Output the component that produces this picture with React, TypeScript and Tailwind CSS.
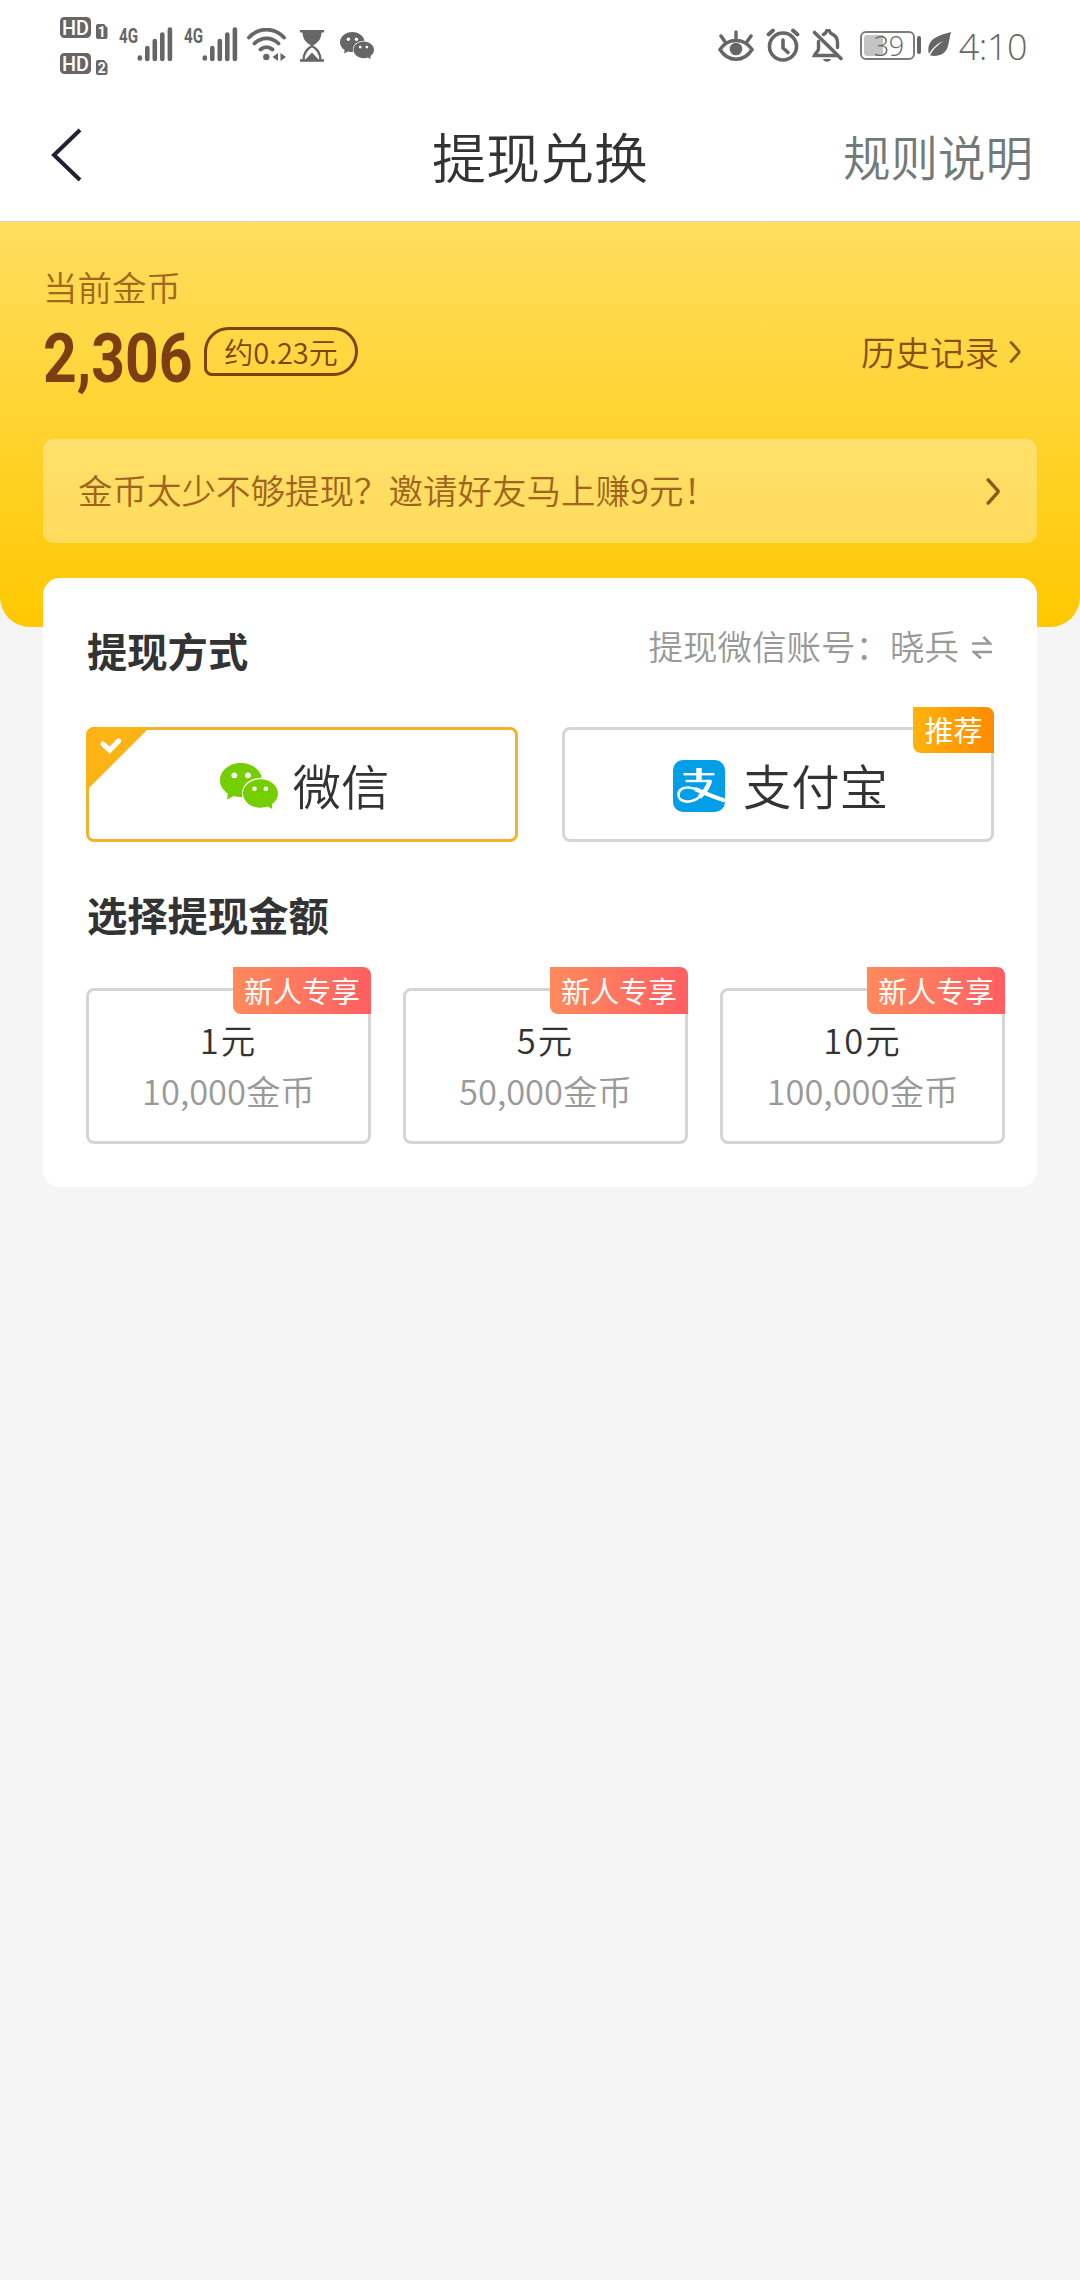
import type { ReactNode } from 'react';

const amounts = [
  { price: '1元', coins: '10,000金币' },
  { price: '5元', coins: '50,000金币' },
  { price: '10元', coins: '100,000金币' },
];

function HdBadge({ sim }: { sim: string }) {
  return (
    <svg width="49" height="24" viewBox="0 0 49 24" fill="#666">
      <rect x="0" y="1" width="31" height="21" rx="4.5" />
      <text x="15.5" y="18.500" fontSize="20" fontWeight="500" fill="#fff" textAnchor="middle" textLength="27" lengthAdjust="spacingAndGlyphs" fontFamily="Roboto, sans-serif">HD</text>
      <path d="M38 8h6l3.500 4v9a2 2 0 0 1-2 2h-7.500a2 2 0 0 1-2-2v-11a2 2 0 0 1 2-2z" />
      <text x="41.700" y="20.500" fontSize="14" fontWeight="700" fill="#fff" textAnchor="middle" fontFamily="Roboto, sans-serif">{sim}</text>
    </svg>
  );
}

function Signal() {
  return (
    <svg width="54" height="42" viewBox="0 -8 54 42">
      <text x="0" y="14.800" fontSize="20" fontWeight="700" fill="#666" textLength="19" lengthAdjust="spacingAndGlyphs" fontFamily="Roboto, sans-serif">4G</text>
      <g stroke="#666" strokeWidth="4.600" strokeLinecap="round">
        <path d="M20.800 30.500v-1M28.300 31v-11M35.800 31v-18M43.300 31v-24.500M50.900 31v-29.500" />
      </g>
    </svg>
  );
}

function WechatLogo({ color, className }: { color: string; className: string }) {
  return (
    <svg viewBox="0 0 58 46" className={className}>
      <path fill={color} d="M21 0C9.400 0 0 7.700 0 17.300c0 5.400 3 10 7.800 13.200L7 36.500l6.800-3.400c2.300.7 4.700 1.100 7.200 1.100 11.600 0 21-7.600 21-17C42 7.700 32.600 0 21 0z" />
      <ellipse cx="40.500" cy="30.500" rx="18.600" ry="15.800" fill="#fff" />
      <path fill={color} d="M40.500 16.200c9.700 0 17.500 6.300 17.500 14.200 0 4.300-2.300 8-6 10.600l.3 5-4.600-2.400c-2.200.7-4.600 1.100-7.200 1.100-9.700 0-17.500-6.400-17.500-14.300s7.800-14.200 17.500-14.200z" />
      <g fill="#fff">
        <circle cx="14.300" cy="12.300" r="2.900" />
        <circle cx="28" cy="12.300" r="2.900" />
        <circle cx="34.500" cy="25.700" r="2.300" />
        <circle cx="45.800" cy="25.700" r="2.300" />
      </g>
    </svg>
  );
}

function AlipayLogo() {
  return (
    <svg viewBox="0 0 52 52" className="mt-[3px] h-[52px] w-[52px]">
      <rect width="52" height="52" rx="10" fill="#029fe8" />
      <g fill="none" stroke="#fff">
        <path d="M10.500 14.200h31" strokeWidth="2.400" />
        <path d="M12.500 21h26" strokeWidth="2.400" />
        <path d="M26 8v13" strokeWidth="5.500" />
        <path d="M37 20.500C35 27 31 33 26.500 37" strokeWidth="4.500" />
        <path d="M27 36.500C22 41 17.500 41.800 13.500 41.600c-5.500-.3-8.500-3.300-8-7.600.5-4.500 5-6.800 10-6.500 3.500.2 7 1.300 11 3" strokeWidth="2.600" />
        <path d="M22 29c7 2.500 14 6.500 30 11.500" strokeWidth="4" />
      </g>
    </svg>
  );
}

function StatusBar() {
  return (
    <div className="flex h-[90px] shrink-0 items-start justify-between pr-[53px] pl-[60px] text-[#666]">
      <div className="flex">
        <div className="mt-4 flex flex-col gap-3">
          <HdBadge sim="1" />
          <HdBadge sim="2" />
        </div>
        <div className="mt-[20px] ml-[10px] flex gap-[11px]">
          <Signal />
          <Signal />
        </div>
        <svg width="40" height="34" viewBox="0 0 40 34" className="mt-[28px] ml-[9px]" fill="none" stroke="#666" strokeWidth="3.800" strokeLinecap="round">
          <path d="M2 9.500C12-1 27-1 37 9.500M7.500 15.500c7-6.800 17-6.800 24 0M13.500 21.500c3.500-3.300 8.500-3.300 12 0" />
          <circle cx="19.300" cy="29" r="3.200" fill="#666" stroke="none" />
          <path d="M31 25v8l-5.500-4zM33.500 25v8l5.500-4z" fill="#666" stroke="none" />
        </svg>
        <svg width="26" height="32" viewBox="0 0 26 32" className="mt-[30px] ml-[12px]">
          <path d="M1 1.200h24M1 30.500h24" stroke="#666" strokeWidth="2.400" />
          <path d="M3.500 2h19c0 7-3.500 11-9.500 14C7 13 3.500 9 3.500 2z" fill="#666" />
          <path d="M4.500 30c0-7 3-11 8.500-14 5.500 3 8.500 7 8.500 14" fill="none" stroke="#666" strokeWidth="2.300" />
          <path d="M6 30l7-7.500 7 7.500z" fill="#666" />
        </svg>
        <WechatLogo color="#666" className="mt-[31px] ml-[15px] h-[29px] w-[34px]" />
      </div>

      <div className="flex">
        <svg width="36" height="34" viewBox="0 0 36 34" className="mt-[29px]" fill="none" stroke="#666" strokeWidth="3.500" strokeLinecap="round">
          <path d="M2 20.500c8-12 24-12 32 0-8 13-24 13-32 0zM18 3v6M3 7l3.500 5M33 7l-3.500 5" />
          <circle cx="18" cy="20" r="6.300" fill="#666" stroke="none" />
        </svg>
        <svg width="34" height="34" viewBox="0 0 34 34" className="mt-[28px] ml-[12px]" fill="none" stroke="#666" strokeLinecap="round">
          <circle cx="17" cy="18.500" r="13.500" strokeWidth="3.600" />
          <path d="M17 12v8l5 4.500" strokeWidth="3.600" />
          <path d="M2.500 6.500L7 2.500M31.500 6.500L27 2.500" strokeWidth="3.800" />
        </svg>
        <svg width="32" height="34" viewBox="0 0 32 34" className="mt-[29px] ml-[12px]" fill="none" stroke="#666" strokeWidth="3.400" strokeLinecap="round">
          <path d="M6.500 12.500v7.500c0 2-3 4-4 6.500h23" />
          <path d="M11.500 5.500c1.500-1 2.500-1 3-3.500 1-1 2-1 3 0 .5 2.500 1.500 2.500 3.500 3.500 3.500 2 4.500 4.500 4.500 8v5" />
          <path d="M2.500 3.500l26.500 26" strokeWidth="3.600" />
          <path d="M11 30h8c-1 3.500-7 3.500-8 0z" fill="#666" stroke="none" />
        </svg>
        <div className="mt-[31px] ml-[16px] flex h-[29px] w-[55px] rounded-[6px] border-2 border-[#7c7c7c] p-[2px]">
          <div className="w-[19px] shrink-0 rounded-l-[3px] bg-[#c4c4c4]" />
          <span className="-ml-[9px] font-['Open_Sans'] text-[27px] leading-[22px] font-light tracking-[-0.5px]">39</span>
        </div>
        <div className="mt-[36px] ml-[2px] h-[18px] w-[4px] rounded-full bg-[#666]" />
        <svg width="23" height="25" viewBox="0 0 23 25" className="mt-[32px] ml-[7px]">
          <path d="M23 0C12 3 2 6 .500 15c-.5 3 0 5 .5 7C5 15 10 11.500 15.500 9 10 13 5 17 2 23.500c9 1.500 15-1.500 17.500-8C21 11 21.500 5 23 0z" fill="#666" />
        </svg>
        <span className="mt-[22px] ml-[8px] font-['Open_Sans'] text-[36px] leading-[50px] font-light tracking-[-0.5px]">4:10</span>
      </div>
    </div>
  );
}

function Chevron({ className, width }: { className: string; width: number }) {
  return (
    <svg viewBox="0 0 14 28" className={className} fill="none" stroke="#8b5a18" strokeWidth={width} strokeLinecap="round" strokeLinejoin="round">
      <path d="M2 2l9.500 10.500q1.500 1.500 0 3L2 26" />
    </svg>
  );
}

function MethodBox({ active, children }: { active?: boolean; children: ReactNode }) {
  return (
    <div className={`relative flex h-[115px] w-[432px] items-center justify-center rounded-lg border-[3px] pl-[5px] ${active ? 'border-[#f1b22c]' : 'border-[#d5d5d5]'}`}>
      {children}
    </div>
  );
}

export default function App() {
  return (
    <div className="flex h-[2280px] w-[1080px] flex-col bg-[#f5f5f5] font-['Noto_Sans_CJK_SC',sans-serif] font-[350] text-[#333]">
      <header className="shrink-0 border-b border-[#d8d4c4] bg-white">
        <StatusBar />
        <div className="grid h-[131px] grid-cols-3 items-center pr-[47px] pl-[51px]">
          <svg width="32" height="54" viewBox="0 0 32 54" className="-mt-px" fill="none" stroke="#222033" strokeWidth="4">
            <path d="M29 2L3 27l26 25" />
          </svg>
          <h1 className="-ml-[4px] text-center text-[54px] leading-[70px] whitespace-nowrap">提现兑换</h1>
          <span className="text-right text-[47.500px] leading-[70px] text-[#727a77]">规则说明</span>
        </div>
      </header>

      <section className="h-[405px] shrink-0 rounded-b-[30px] bg-linear-to-b/srgb from-[#ffde60] to-[#ffc800] px-[43px] pt-[38px]">
        <p className="text-[34.500px] leading-[52px] text-[#a3671c]">当前金币</p>
        <div className="mt-[14px] flex h-[66px] items-center justify-between">
          <div className="flex items-center">
            <span className="w-[161px] origin-left scale-x-[0.853] font-[Roboto] text-[69px] leading-[66px] font-bold whitespace-nowrap text-[#7c3d11]">2,306</span>
            <span className="-mt-[15px] flex h-[49px] w-[154px] items-center justify-center rounded-[25px] rounded-bl-[8px] border-[3px] border-[#7f4209] text-[29px] text-[#7f4209]">约0.23元</span>
          </div>
          <div className="-mt-[15px] mr-[16px] flex items-center text-[34.500px] text-[#8b4f10]">
            历史记录
            <Chevron className="ml-[10px] h-[22px] w-[12px]" width={3.600} />
          </div>
        </div>
        <div className="mt-[47px] flex h-[104px] items-center justify-between rounded-[11px] bg-white/30 pr-[36px] pl-[35px] text-[34.500px] text-[#a0641c]">
          <span className="-mt-[2px]">金币太少不够提现？邀请好友马上赚9元！</span>
          <Chevron className="h-[27px] w-[16px]" width={3.600} />
        </div>
      </section>

      <main className="relative mx-[43px] -mt-[49px] h-[609px] shrink-0 rounded-[17px] bg-white px-[43px] pt-[42px]">
        <div className="flex justify-between">
          <h2 className="ml-px text-[40.300px] leading-[60px] font-bold">提现方式</h2>
          <div className="mt-px flex h-[50px] items-center gap-[13px] pr-[2px] text-[34.500px] text-[#999]">
            提现微信账号：晓兵
            <svg width="20" height="24" viewBox="0 0 20 24" className="mt-[2px]" fill="none" stroke="#999" strokeWidth="2.600">
              <path d="M0 8.500h18L11.500 2M20 17H2l7 6.500" />
            </svg>
          </div>
        </div>

        <div className="mt-[47px] flex justify-between">
          <MethodBox active>
            <svg width="64" height="64" viewBox="0 0 62 62" className="absolute -top-[3px] -left-[3px]">
              <path d="M0 62V8a8 8 0 0 1 8-8h54z" fill="#fcb316" />
              <path d="M16.500 16.500l6.500 6L31.500 13.500" fill="none" stroke="#fff" strokeWidth="5" strokeLinecap="round" />
            </svg>
            <WechatLogo color="#74ce00" className="mt-[3px] mr-[15px] h-[46px] w-[58px]" />
            <span className="-mt-[2px] text-[48.300px] leading-[70px]">微信</span>
          </MethodBox>
          <MethodBox>
            <AlipayLogo />
            <span className="-mt-[2px] ml-[18px] text-[48.300px] leading-[70px]">支付宝</span>
            <span className="absolute -top-[23px] -right-[3px] flex h-[46px] w-[81px] items-center justify-center rounded-tr-lg rounded-bl-lg bg-linear-to-r from-[#ffb30c] to-[#ff8a00] pb-px text-[29px] font-normal text-white">推荐</span>
          </MethodBox>
        </div>

        <h2 className="mt-[42px] ml-px text-[40.300px] leading-[60px] font-bold">选择提现金额</h2>
        <div className="mt-[44px] flex gap-8">
          {amounts.map((item) => (
            <div key={item.price} className="relative h-[156px] w-[285px] shrink-0 rounded-lg border-[3px] border-[#d5d5d5] pt-[23px] text-center text-[34.500px] leading-[51px]">
              <div className="tracking-[2px]">{item.price}</div>
              <div className="text-[#999]">{item.coins}</div>
              <span className="absolute -top-[24px] -right-[3px] flex h-[47px] w-[138px] items-center justify-center rounded-tr-lg rounded-bl-lg bg-linear-to-r from-[#ff8a5c] to-[#ff5e62] pb-px text-[29px] font-normal text-white">新人专享</span>
            </div>
          ))}
        </div>
      </main>
    </div>
  );
}
